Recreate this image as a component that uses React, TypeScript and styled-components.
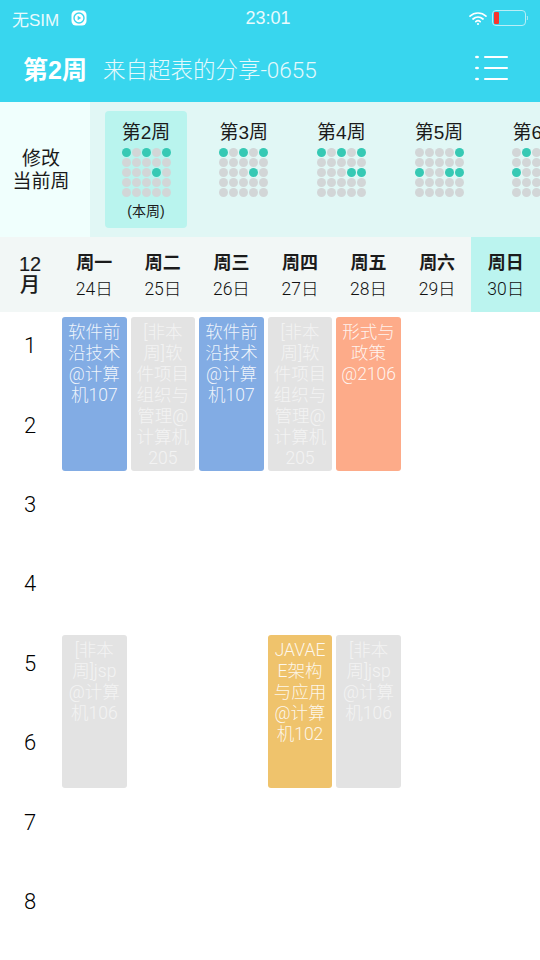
import styled, { createGlobalStyle } from 'styled-components';

const FONT = `"Liberation Sans", "Noto Sans CJK SC", sans-serif`;
const LIGHT_FONT = `Roboto, "Noto Sans CJK SC", sans-serif`;

const weeks = [
  { name: '第2周', current: true, on: [0, 2, 4, 13] },
  { name: '第3周', on: [0, 2, 4, 13] },
  { name: '第4周', on: [0, 2, 4, 13, 14] },
  { name: '第5周', on: [4, 10, 13, 14] },
  { name: '第6周', on: [1, 10] },
];

const days = [
  { name: '周一', date: '24日' },
  { name: '周二', date: '25日' },
  { name: '周三', date: '26日' },
  { name: '周四', date: '27日' },
  { name: '周五', date: '28日' },
  { name: '周六', date: '29日' },
  { name: '周日', date: '30日', today: true },
];

const COLORS = { blue: '#82ace4', gray: '#e3e3e3', orange: '#fdab89', yellow: '#efc36c' };

const courses: { day: number; start: number; color: keyof typeof COLORS; text: string }[] = [
  { day: 1, start: 1, color: 'blue', text: '软件前沿技术@计算机107' },
  { day: 2, start: 1, color: 'gray', text: '[非本周]软件项目组织与管理@计算机205' },
  { day: 3, start: 1, color: 'blue', text: '软件前沿技术@计算机107' },
  { day: 4, start: 1, color: 'gray', text: '[非本周]软件项目组织与管理@计算机205' },
  { day: 5, start: 1, color: 'orange', text: '形式与政策@2106' },
  { day: 1, start: 5, color: 'gray', text: '[非本周]jsp@计算机106' },
  { day: 4, start: 5, color: 'yellow', text: 'JAVAEE架构与应用@计算机102' },
  { day: 5, start: 5, color: 'gray', text: '[非本周]jsp@计算机106' },
];

const App = () => (
  <Page>
    <GlobalStyle />
    <Top>
      <StatusBar>
        <StatusLeft>
          无SIM
          <svg width="16" height="16" viewBox="0 0 16 16">
            <rect x="0.5" y="0.5" width="15" height="15" rx="4.5" fill="#fff" />
            <circle cx="8" cy="8" r="5" fill="none" stroke="#38d6ee" strokeWidth="1.4" />
            <path d="M6.7 5.8 L10.2 8 L6.7 10.2 Z" fill="#38d6ee" />
          </svg>
        </StatusLeft>
        <StatusTime>23:01</StatusTime>
        <StatusRight>
          <svg width="20" height="16" viewBox="0 0 20 16" fill="none" stroke="#fff" strokeWidth="1.7" strokeLinecap="round">
            <path d="M2 6.2 C6.5 1.9 13.5 1.9 18 6.2" />
            <path d="M5 9 C8 6.3 12 6.3 15 9" />
            <path d="M7.8 11.6 C9 10.6 11 10.6 12.2 11.6" />
            <circle cx="10" cy="14" r="1.1" fill="#fff" stroke="none" />
          </svg>
          <svg width="36" height="18" viewBox="0 0 36 18">
            <rect x="0.5" y="1.5" width="33" height="15" rx="3.5" fill="none" stroke="#b9eef6" />
            <rect x="2" y="3" width="5" height="12" rx="1" fill="#f8342c" />
            <path d="M35 7 C36 8 36 10 35 11" fill="none" stroke="#b9eef6" />
          </svg>
        </StatusRight>
      </StatusBar>
      <NavBar>
        <NavTitle>第2周</NavTitle>
        <NavSub>来自超表的分享-0655</NavSub>
        <MenuButton>
          <svg width="34" height="26" viewBox="0 0 34 26" fill="#fff">
            <ellipse cx="3" cy="2" rx="2" ry="1.3" />
            <rect x="10" y="1.1" width="24" height="1.8" rx="0.9" />
            <ellipse cx="3" cy="13" rx="2" ry="1.3" />
            <rect x="10" y="12.1" width="24" height="1.8" rx="0.9" />
            <ellipse cx="3" cy="24" rx="2" ry="1.3" />
            <rect x="10" y="23.1" width="24" height="1.8" rx="0.9" />
          </svg>
        </MenuButton>
      </NavBar>
    </Top>

    <WeekStrip>
      <ChangeWeek>
        修改
        <br />
        当前周
      </ChangeWeek>
      <WeekList>
        {weeks.map(week => (
          <WeekItem key={week.name} $current={week.current}>
            <WeekName>{week.name}</WeekName>
            <DotGrid>
              {Array.from({ length: 25 }, (_, i) => (
                <Dot key={i} $on={week.on.includes(i)} />
              ))}
            </DotGrid>
            {week.current && <WeekNote>(本周)</WeekNote>}
          </WeekItem>
        ))}
      </WeekList>
    </WeekStrip>

    <DayHeader>
      <MonthCell>
        12
        <br />月
      </MonthCell>
      {days.map(day => (
        <DayCell key={day.name} $today={day.today}>
          <DayName>{day.name}</DayName>
          <DayDate>{day.date}</DayDate>
        </DayCell>
      ))}
    </DayHeader>

    <Timetable>
      {Array.from({ length: 8 }, (_, i) => (
        <SlotNumber key={i} $row={i + 1}>
          {i + 1}
        </SlotNumber>
      ))}
      {courses.map(course => (
        <CourseCard
          key={`${course.day}-${course.start}`}
          $day={course.day}
          $start={course.start}
          $color={COLORS[course.color]}
          $muted={course.color === 'gray'}
        >
          {course.text}
        </CourseCard>
      ))}
    </Timetable>
  </Page>
);

export default App;

const GlobalStyle = createGlobalStyle`
  html, body {
    margin: 0;
    padding: 0;
    background: #fff;
  }
`;

const Page = styled.div`
  width: 540px;
  height: 960px;
  overflow: hidden;
  background: #fff;
  color: #1b1b1b;
  font-family: ${FONT};
`;

const Top = styled.header`
  height: 102px;
  background: #38d6ee;
  color: #fff;
`;

const StatusBar = styled.div`
  height: 36px;
  display: grid;
  grid-template-columns: 1fr auto 1fr;
  align-items: center;
  padding: 0 12px;
`;

const StatusLeft = styled.div`
  display: flex;
  align-items: center;
  gap: 12px;
  font-size: 17px;
  color: #e8fafd;
`;

const StatusTime = styled.div`
  font-size: 18px;
  color: #e8fafd;
  margin-left: -4px;
`;

const StatusRight = styled.div`
  display: flex;
  align-items: center;
  justify-content: flex-end;
  gap: 4px;
`;

const NavBar = styled.div`
  height: 64px;
  display: flex;
  align-items: center;
  padding: 0 32px 0 23px;
`;

const NavTitle = styled.div`
  font-size: 25px;
  font-weight: 700;
`;

const NavSub = styled.div`
  margin-left: 16px;
  font-family: ${LIGHT_FONT};
  font-size: 22.5px;
  font-weight: 300;
  color: #e4f9fc;
`;

const MenuButton = styled.div`
  margin-left: auto;
  display: flex;
`;

const WeekStrip = styled.section`
  height: 135px;
  display: flex;
  background: #e1f7f5;
`;

const ChangeWeek = styled.div`
  flex: 0 0 90px;
  box-sizing: border-box;
  padding: 45px 8px 0 0;
  text-align: center;
  background: #f0fffd;
  font-size: 19px;
  line-height: 23px;
`;

const WeekList = styled.div`
  flex: 1;
  min-width: 0;
  display: flex;
  padding: 9px 0 0 15px;
  gap: 15.7px;
  overflow: hidden;
`;

const WeekItem = styled.div<{ $current?: boolean }>`
  flex: 0 0 82px;
  height: 117px;
  box-sizing: border-box;
  padding-top: 10px;
  border-radius: 4px;
  display: flex;
  flex-direction: column;
  align-items: center;
  background: ${p => (p.$current ? '#b9f4ee' : 'transparent')};
`;

const WeekName = styled.div`
  font-size: 19px;
  line-height: 24px;
  white-space: nowrap;
`;

const DotGrid = styled.div`
  margin-top: 3px;
  display: grid;
  grid-template-columns: repeat(5, 9px);
  grid-auto-rows: 9px;
  gap: 1px;
`;

const Dot = styled.span<{ $on: boolean }>`
  border-radius: 50%;
  background: ${p => (p.$on ? '#36c9b4' : '#d2d6d7')};
`;

const WeekNote = styled.div`
  margin-top: 5px;
  font-size: 14px;
  line-height: 18px;
`;

const DayHeader = styled.section`
  height: 75px;
  display: grid;
  grid-template-columns: 60px repeat(7, 1fr);
  background: #f2f7f6;
`;

const MonthCell = styled.div`
  font-size: 20px;
  line-height: 21px;
  font-weight: 500;
  text-align: center;
  padding-top: 17px;
  -webkit-text-stroke: 0.15px #1b1b1b;
`;

const DayCell = styled.div<{ $today?: boolean }>`
  display: flex;
  flex-direction: column;
  align-items: center;
  padding-top: 13px;
  box-sizing: border-box;
  background: ${p => (p.$today ? '#bbf4ef' : 'transparent')};
`;

const DayName = styled.div`
  font-size: 18px;
  line-height: 26px;
  font-weight: 700;
`;

const DayDate = styled.div`
  font-family: ${LIGHT_FONT};
  font-weight: 300;
  font-size: 17.5px;
  line-height: 26px;
  color: #111;
`;

const Timetable = styled.section`
  display: grid;
  grid-template-columns: 60px repeat(7, 1fr);
  grid-template-rows: repeat(8, 79.4px);
`;

const SlotNumber = styled.div<{ $row: number }>`
  grid-column: 1;
  grid-row: ${p => p.$row};
  display: flex;
  align-items: center;
  justify-content: center;
  padding-bottom: 12px;
  font-family: ${LIGHT_FONT};
  font-weight: 300;
  font-size: 22px;
  color: #000;
`;

const CourseCard = styled.div<{ $day: number; $start: number; $color: string; $muted: boolean }>`
  grid-column: ${p => p.$day + 1};
  grid-row: ${p => p.$start} / span 2;
  margin: 5px 2px 0;
  padding: 5px 4px 0;
  border-radius: 3px;
  background: ${p => p.$color};
  color: ${p => (p.$muted ? '#f3f3f3' : 'rgba(255, 255, 255, 0.88)')};
  font-family: ${LIGHT_FONT};
  font-size: 17.5px;
  line-height: 21px;
  font-weight: 300;
  text-align: center;
  overflow-wrap: anywhere;
  overflow: hidden;
`;
